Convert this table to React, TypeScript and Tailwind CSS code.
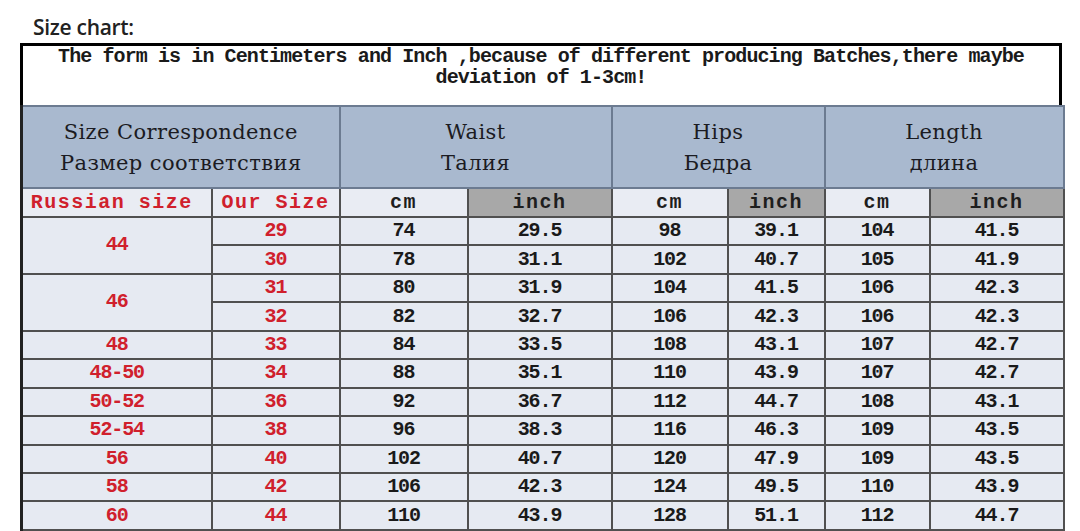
const rows = [
  ['29', '74', '29.5', '98', '39.1', '104', '41.5'],
  ['30', '78', '31.1', '102', '40.7', '105', '41.9'],
  ['31', '80', '31.9', '104', '41.5', '106', '42.3'],
  ['32', '82', '32.7', '106', '42.3', '106', '42.3'],
  ['33', '84', '33.5', '108', '43.1', '107', '42.7'],
  ['34', '88', '35.1', '110', '43.9', '107', '42.7'],
  ['36', '92', '36.7', '112', '44.7', '108', '43.1'],
  ['38', '96', '38.3', '116', '46.3', '109', '43.5'],
  ['40', '102', '40.7', '120', '47.9', '109', '43.5'],
  ['42', '106', '42.3', '124', '49.5', '110', '43.9'],
  ['44', '110', '43.9', '128', '51.1', '112', '44.7'],
]

// russian size per row index, with rowspan; null = covered by span above
const russian: ({ label: string; span: number } | null)[] = [
  { label: '44', span: 2 },
  null,
  { label: '46', span: 2 },
  null,
  { label: '48', span: 1 },
  { label: '48-50', span: 1 },
  { label: '50-52', span: 1 },
  { label: '52-54', span: 1 },
  { label: '56', span: 1 },
  { label: '58', span: 1 },
  { label: '60', span: 1 },
]

const headers = [
  { en: 'Size Correspondence', ru: 'Размер соответствия' },
  { en: 'Waist', ru: 'Талия' },
  { en: 'Hips', ru: 'Бедра' },
  { en: 'Length', ru: 'длина' },
]

const mono = "font-['Liberation_Mono',monospace] font-bold"
const cell = 'border-2 border-[#505050] p-0 text-center align-middle'
const sub = `${cell} ${mono} text-[20px] leading-[22px] tracking-[1.5px]`
const data = `${cell} bg-[#e6eaf2] ${mono} text-[20px] leading-[20px] tracking-[-1.1px]`

export default function App() {
  return (
    <div className="w-[1080px] h-[531px] bg-white overflow-hidden">
      <div className="pl-[33px] pt-[13px] h-[43px] font-['Open_Sans',sans-serif] font-semibold text-[21px] leading-[28px] tracking-[-0.3px] text-[#222]">
        Size chart:
      </div>
      <div className="ml-[20px] w-[1042px]">
        <div className="h-[62px] bg-white border-t-[3px] border-x-[3px] border-black text-center text-[20px] leading-[21px] tracking-[-0.9px] text-[#1a1a1a] font-['Liberation_Mono',monospace] font-bold">
          The form is in Centimeters and Inch ,because of different producing Batches,there maybe
          <br />
          deviation of 1-3cm!
        </div>
        <table className="w-[1042px] table-fixed border-collapse border-l-[3px] border-l-[#222]">
          <colgroup>
            <col className="w-[190px]" />
            <col className="w-[128px]" />
            <col className="w-[128px]" />
            <col className="w-[144px]" />
            <col className="w-[116px]" />
            <col className="w-[97px]" />
            <col className="w-[105px]" />
            <col className="w-[134px]" />
          </colgroup>
          <tbody>
            <tr className="h-[82px]">
              {headers.map((h) => (
                <td
                  key={h.en}
                  colSpan={2}
                  className="border-2 border-[#6c7b91] bg-[#a9b9cf] p-0 text-center align-middle font-['DejaVu_Serif',serif] text-[21px] leading-[31px] tracking-[0.4px] text-[#1b1b22]"
                >
                  <div className="pt-[2px]">{h.en}</div>
                  <div>{h.ru}</div>
                </td>
              ))}
            </tr>
            <tr className="h-[29px]">
              <td className={`${sub} bg-[#e9ecf3] text-[#d0202c] pr-[10px]`}>Russian size</td>
              <td className={`${sub} bg-[#e9ecf3] text-[#d0202c]`}>Our Size</td>
              {[0, 1, 2].map((i) => (
                <>
                  <td key={`c${i}`} className={`${sub} bg-[#e9ecf3] text-[#1e1e1e]`}>cm</td>
                  <td key={`i${i}`} className={`${sub} bg-[#a8a8a8] text-[#1e1e1e]`}>inch</td>
                </>
              ))}
            </tr>
            {rows.map((r, idx) => (
              <tr key={r[0]} className="h-[28.45px]">
                {russian[idx] && (
                  <td rowSpan={russian[idx]!.span} className={`${data} text-[#d0202c]`}>
                    {russian[idx]!.label}
                  </td>
                )}
                {r.map((v, j) => (
                  <td key={j} className={`${data} ${j === 0 ? 'text-[#d0202c]' : 'text-[#1a1a1a]'}`}>
                    {v}
                  </td>
                ))}
              </tr>
            ))}
          </tbody>
        </table>
      </div>
    </div>
  )
}
